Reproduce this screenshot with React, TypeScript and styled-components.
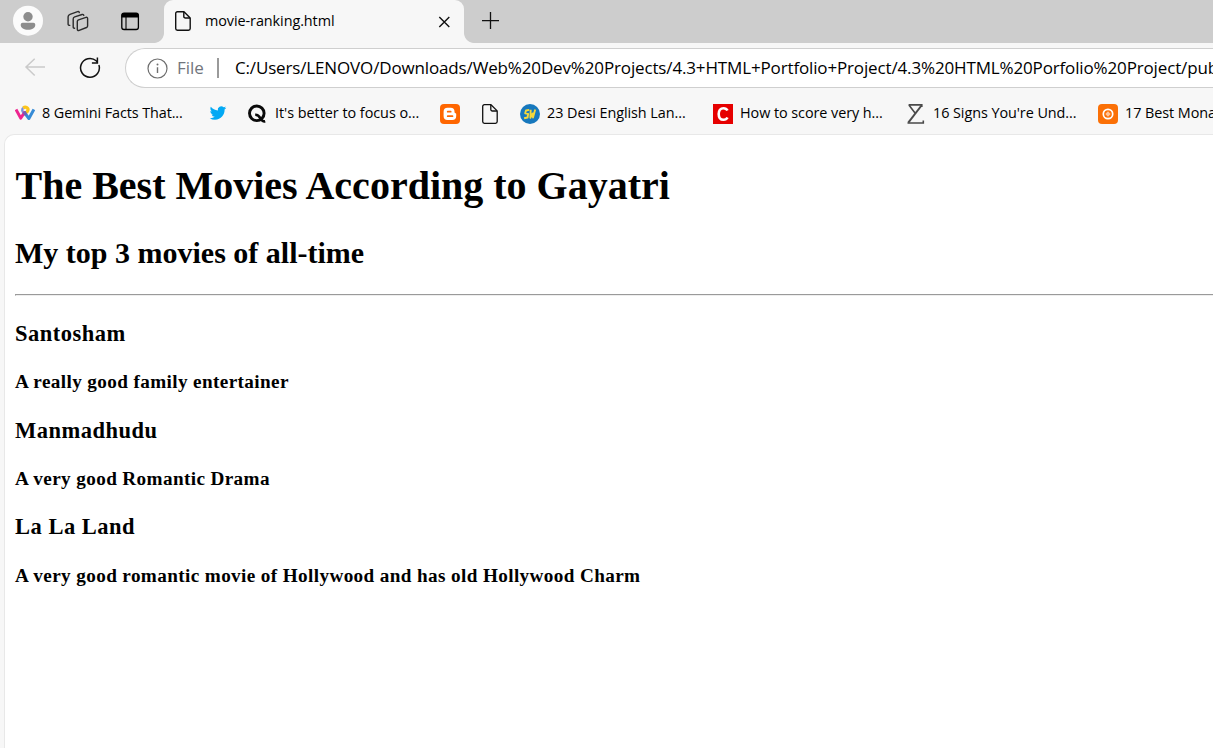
import React from 'react';
import styled, { createGlobalStyle } from 'styled-components';

const GlobalStyle = createGlobalStyle`
  body { margin: 0; background: #f7f7f7; overflow: hidden; }
  svg { display: block; flex: none; }
`;

const Window = styled.div`
  display: flex;
  flex-direction: column;
  height: 100vh;
  overflow: hidden;
  color: #000;
  font-family: "Open Sans", "Noto Sans", sans-serif;
`;

const TabStrip = styled.header`
  display: flex;
  flex: none;
  height: 43px;
  background: #cdcdcd;
`;

const StripTools = styled.div`
  display: flex;
  align-items: flex-start;
  gap: 22px;
  box-sizing: border-box;
  width: 164px;
  padding: 5px 24px 0 13px;
`;

const StripEnd = styled.div`
  margin-left: auto;
`;

const Tab = styled.div`
  position: relative;
  display: flex;
  align-items: center;
  box-sizing: border-box;
  width: 300px;
  height: 43px;
  padding: 0 13px 2px 9px;
  border-radius: 9px 9px 0 0;
  background: #f7f7f7;
  font-size: 14.4px;
`;

const TabFlare = styled.span<{ $side: 'left' | 'right' }>`
  position: absolute;
  bottom: 0;
  ${p => p.$side}: -10px;
  width: 10px;
  height: 10px;
  background: radial-gradient(
    circle at ${p => (p.$side === 'left' ? '0 0' : '100% 0')},
    transparent 9.5px,
    #f7f7f7 10.3px
  );
`;

const TabTitle = styled.span`
  flex: 1;
  margin-left: 12px;
  line-height: 20px;
  letter-spacing: -0.07px;
`;

const NewTab = styled.div`
  padding: 11px 0 0 17px;
`;

const Toolbar = styled.div`
  display: flex;
  flex: none;
  align-items: center;
  height: 50px;
  padding-left: 24px;
`;

const NavButton = styled.div<{ $gap: number }>`
  margin-right: ${p => p.$gap}px;
`;

const AddressBar = styled.div`
  display: flex;
  flex: 1;
  align-items: center;
  min-width: 0;
  box-sizing: border-box;
  height: 40px;
  padding-left: 21px;
  border: 1px solid #cfcfcf;
  border-right: 0;
  border-radius: 20px 0 0 20px;
  background: #fff;
  font-size: 17px;
  line-height: 24px;
  overflow: hidden;
`;

const Scheme = styled.span`
  margin: -1px 0 0 9px;
  color: #71757d;
`;

const Separator = styled.span`
  flex: none;
  width: 2px;
  height: 20px;
  margin: 0 16px 0 13px;
  background: #9a9a9a;
`;

const Url = styled.span`
  margin-top: -1px;
  letter-spacing: -0.145px;
  white-space: nowrap;
`;

const Bookmarks = styled.nav`
  display: flex;
  flex: none;
  align-items: center;
  height: 41px;
  padding-left: 15px;
`;

const Bookmark = styled.div<{ $width: number }>`
  display: flex;
  flex: none;
  align-items: center;
  gap: 7px;
  width: ${p => p.$width}px;
  font-size: 14.4px;
  line-height: 20px;
  white-space: nowrap;
`;

const BookmarkLabel = styled.span<{ $spacing?: number }>`
  margin-top: -1px;
  letter-spacing: ${p => p.$spacing ?? -0.06}px;
`;

const Page = styled.main`
  flex: 1;
  min-height: 0;
  margin-left: 4px;
  padding: 28px 0 0 10px;
  border: 1px solid #e8e8e8;
  border-width: 1px 0 0 1px;
  border-radius: 10px 0 0 0;
  background: #fff;
  font-family: "Liberation Serif", "Times New Roman", serif;
`;

const Title = styled.h1`
  margin: 0;
  padding-left: 0.5px;
  font-size: 40px;
  line-height: 46px;
`;

const Subtitle = styled.h2`
  margin: 27px 0 23.6px;
  font-size: 30px;
  line-height: 34px;
`;

const Rule = styled.hr`
  height: 0;
  margin: 0 0 24.2px;
  border: solid;
  border-width: 1px 0 1px 1px;
  border-color: #9a9a9a #eee #eee #9a9a9a;
`;

const MovieName = styled.h3`
  margin: 0 0 22.3px;
  font-size: 22.5px;
  line-height: 28px;
  letter-spacing: 0.5px;
`;

const MovieNote = styled.p`
  margin: 0 0 22.5px;
  font-size: 19.2px;
  font-weight: bold;
  line-height: 24px;
  letter-spacing: 0.375px;
`;

const ProfileIcon = () => (
  <svg width="30" height="31" viewBox="0 0 30 31">
    <circle cx="15" cy="15.7" r="15" fill="#fbfbfb" />
    <circle cx="15" cy="11.8" r="4.7" fill="#8d8d8d" />
    <path d="M9.700 17.700h10.600a2 2 0 0 1 2 2c0 3.200-3.200 5-7.300 5s-7.300-1.800-7.300-5a2 2 0 0 1 2-2z" fill="#8d8d8d" />
  </svg>
);

const WorkspacesIcon = () => (
  <svg width="26" height="30" viewBox="65 5 26 30" fill="none" stroke="#2b2b2b" strokeWidth="1.4" strokeLinecap="round" strokeLinejoin="round">
    <path d="M78.500 19.800 86 17.400q1.600-.4 1.600 1.200v7.300q0 1.100-1.100 1.600l-7.300 2.900q-1.900.6-1.900-1.200v-7.700q0-1.300 1.200-1.700z" />
    <path d="M83.800 15.400q-.3-1.300-1.700-.9l-7.400 2.400q-1.500.5-1.500 2v8q0 1.500 1.400 1.300" />
    <path d="M79.300 12.500q-.3-1.300-1.700-.9l-7.600 2.700q-1.900.7-1.900 2.400v7.200q0 1.600 1.700 1.500" />
  </svg>
);

const PaneIcon = () => (
  <svg width="20" height="30" viewBox="120 5 20 30" fill="none">
    <rect x="121.800" y="13.200" width="16.600" height="16.300" rx="2.300" stroke="#000" strokeWidth="1.300" />
    <path d="M121.500 17.600v-2a2.700 2.700 0 0 1 2.700-2.700h11.800a2.700 2.700 0 0 1 2.700 2.700v2z" fill="#000" />
    <path d="M126 17v12.500" stroke="#000" strokeWidth="1.100" />
  </svg>
);

const FileIcon = ({ stroke = 1.4 }: { stroke?: number }) => (
  <svg width="20" height="20" viewBox="0 0 20 20" fill="none" stroke="#111" strokeWidth={stroke} strokeLinejoin="round">
    <path d="M4.400.7h6.600l6.200 6.200v10.700a1.700 1.700 0 0 1-1.700 1.700H4.400a1.700 1.700 0 0 1-1.700-1.700V2.400A1.700 1.700 0 0 1 4.400.7z" />
    <path d="M10.800.9v4.500a1.600 1.600 0 0 0 1.600 1.600h4.600" />
  </svg>
);

const CloseIcon = () => (
  <svg width="14" height="14" viewBox="0 0 14 14" stroke="#111" strokeWidth="1.400">
    <path d="M2.300 3l10 10M12.300 3 2.300 13" />
  </svg>
);

const PlusIcon = () => (
  <svg width="19" height="19" viewBox="0 0 19 19" stroke="#111" strokeWidth="1.300">
    <path d="M1 9.700h17M9.500 1v17" />
  </svg>
);

const BackIcon = () => (
  <svg width="22" height="20" viewBox="0 0 22 20" fill="none" stroke="#cacaca" strokeWidth="1.500">
    <path d="M21 9H2.300M10.700.7 2 9l8.700 8.500" />
  </svg>
);

const ReloadIcon = () => (
  <svg width="22" height="22" viewBox="0.400 0.400 22 22" fill="none" stroke="#111" strokeWidth="1.500">
    <path d="M13.300 6.300h5.500V.8" />
    <path d="M20.300 8.300a9.400 9.400 0 1 1-2.700-4.100l1.200 1.600" />
  </svg>
);

const InfoIcon = () => (
  <svg width="21" height="21" viewBox="0 0 21 21" fill="none" stroke="#6f6f6f">
    <circle cx="10.500" cy="10.500" r="9.500" strokeWidth="1.200" />
    <path d="M10.500 9.200v5.800" strokeWidth="1.400" />
    <circle cx="10.500" cy="6.400" r="1" fill="#6f6f6f" stroke="none" />
  </svg>
);

const RibbonIcon = () => (
  <svg width="20" height="20" viewBox="0 0 20 20" fill="none" strokeWidth="3" strokeLinejoin="round">
    <path d="M8.600 8.600A3 3 0 0 1 8.200 3.900" stroke="#7c8fd9" strokeWidth="2.400" />
    <path d="M8.200 3.900c2.600-1.700 5.500.2 4.700 2.700-.4 1.200-1.300 2-2.500 2.500" stroke="#fcc51c" strokeWidth="3.200" />
    <path d="m1 5.500 4.700 8.600 4.500-6.600" stroke="#ed248f" />
    <path d="m9 8 4.900 6.500 5-9" stroke="#368bd6" />
    <path d="m8.900 7.900 2 3.100" stroke="#765ab2" />
  </svg>
);

const TwitterIcon = () => (
  <svg width="20" height="20" viewBox="-2.500 -1 29 29" fill="#03a9f4">
    <path d="M23.950 4.570a10 10 0 0 1-2.820.77 4.960 4.960 0 0 0 2.160-2.720c-.95.55-2 .95-3.120 1.180a4.920 4.920 0 0 0-8.390 4.480C7.690 8.090 4.070 6.130 1.640 3.160a4.820 4.820 0 0 0-.67 2.480c0 1.710.87 3.210 2.190 4.100a4.900 4.900 0 0 1-2.230-.62v.06a4.920 4.920 0 0 0 3.950 4.830 5 5 0 0 1-2.210.08 4.940 4.940 0 0 0 4.600 3.420A9.870 9.870 0 0 1 0 19.540a14 14 0 0 0 7.550 2.210c9.050 0 14-7.500 14-13.990 0-.21 0-.42-.02-.63a9.940 9.940 0 0 0 2.420-2.560z" />
  </svg>
);

const QIcon = () => (
  <svg width="21" height="20" viewBox="0 0 21 20" fill="none" stroke="#0a0a0a">
    <circle cx="9.800" cy="9.300" r="7.300" strokeWidth="2.900" />
    <path d="M8.200 10.700c3.400-.2 4.300 2 5.800 4.500 1.100 1.900 2.300 2.600 4.200 2" strokeWidth="2.600" />
  </svg>
);

const BloggerIcon = () => (
  <svg width="20" height="20" viewBox="0 0 20 20">
    <rect width="20" height="20" rx="4" fill="#ff6600" />
    <path d="M7.500 3.800h3.200a3.800 3.800 0 0 1 3.800 3.800c0 1.300.3 1.500 1 1.600.5.100.7.400.7.900V12a4 4 0 0 1-4 4H7.500a3.900 3.900 0 0 1-3.900-3.900V7.700a3.900 3.900 0 0 1 3.900-3.900z" fill="#fff" />
    <path d="M7.700 7.700h3M7.700 12.200h4.800" stroke="#ff6600" strokeWidth="1.700" strokeLinecap="round" />
  </svg>
);

const SwIcon = () => (
  <svg width="20" height="20" viewBox="0 0 20 20">
    <circle cx="10" cy="10" r="10" fill="#1778bd" />
    <g fill="none" stroke="#f5d83a" strokeWidth="1.900" strokeLinejoin="round">
      <path d="M9.300 5.900 6 6.500l-.8 2.800 2.900.6-.5 3.600-3.500.8" />
      <path d="m10.700 5.700-.3 8 2.300-4.300.3 4.100 2.200-8" />
    </g>
  </svg>
);

const CIcon = () => (
  <svg width="20" height="20" viewBox="0 0 20 20">
    <rect width="20" height="20" fill="#e60000" />
    <path d="M14.500 6.500C13.700 4.900 12.300 4.200 10.500 4.200 7.400 4.200 5.700 6.500 5.700 10s1.700 5.800 4.800 5.800c1.800 0 3.200-.7 4-2.300" fill="none" stroke="#fff" strokeWidth="2.600" />
  </svg>
);

const SigmaIcon = () => (
  <svg width="20" height="20" viewBox="0 0 20 20" fill="none" stroke="#4a4a4a">
    <path d="M2.600.9h13.200v2M1.500 19h15.800v-2.400M2.900 1l6.500 8.400" strokeWidth="1.600" />
    <path d="M15.500 1.500 2.300 18.700" strokeWidth="2" />
  </svg>
);

const TargetIcon = () => (
  <svg width="20" height="20" viewBox="0 0 20 20">
    <rect width="20" height="20" rx="4" fill="#fb7006" />
    <circle cx="10" cy="10" r="4.700" fill="none" stroke="#fff" strokeWidth="1.700" />
    <path d="m10 7.300 2.700 2.700-2.700 2.700L7.300 10z" fill="#ffc69b" />
  </svg>
);

const bookmarks: { icon: React.ReactNode; label?: string; width: number; spacing?: number }[] = [
  { icon: <RibbonIcon />, label: '8 Gemini Facts That...', width: 193, spacing: -0.1 },
  { icon: <TwitterIcon />, width: 39 },
  { icon: <QIcon />, label: "It's better to focus o...", width: 193, spacing: -0.03 },
  { icon: <BloggerIcon />, width: 40 },
  { icon: <FileIcon stroke={1.3} />, width: 40 },
  { icon: <SwIcon />, label: '23 Desi English Lan...', width: 193 },
  { icon: <CIcon />, label: 'How to score very h...', width: 193 },
  { icon: <SigmaIcon />, label: "16 Signs You're Und...", width: 192 },
  { icon: <TargetIcon />, label: '17 Best Mona...', width: 193 },
];

const movies = [
  ['Santosham', 'A really good family entertainer'],
  ['Manmadhudu', 'A very good Romantic Drama'],
  ['La La Land', 'A very good romantic movie of Hollywood and has old Hollywood Charm'],
];

export default function App() {
  return (
    <Window>
      <GlobalStyle />
      <TabStrip>
        <StripTools>
          <ProfileIcon />
          <WorkspacesIcon />
          <StripEnd><PaneIcon /></StripEnd>
        </StripTools>
        <Tab>
          <TabFlare $side="left" />
          <FileIcon />
          <TabTitle>movie-ranking.html</TabTitle>
          <CloseIcon />
          <TabFlare $side="right" />
        </Tab>
        <NewTab><PlusIcon /></NewTab>
      </TabStrip>
      <Toolbar>
        <NavButton $gap={33}><BackIcon /></NavButton>
        <NavButton $gap={24}><ReloadIcon /></NavButton>
        <AddressBar>
          <InfoIcon />
          <Scheme>File</Scheme>
          <Separator />
          <Url>C:/Users/LENOVO/Downloads/Web%20Dev%20Projects/4.3+HTML+Portfolio+Project/4.3%20HTML%20Porfolio%20Project/pub</Url>
        </AddressBar>
      </Toolbar>
      <Bookmarks>
        {bookmarks.map((b, i) => (
          <Bookmark key={i} $width={b.width}>
            {b.icon}
            {b.label && <BookmarkLabel $spacing={b.spacing}>{b.label}</BookmarkLabel>}
          </Bookmark>
        ))}
      </Bookmarks>
      <Page>
        <Title>The Best Movies According to Gayatri</Title>
        <Subtitle>My top 3 movies of all-time</Subtitle>
        <Rule />
        {movies.map(([name, note]) => (
          <React.Fragment key={name}>
            <MovieName>{name}</MovieName>
            <MovieNote>{note}</MovieNote>
          </React.Fragment>
        ))}
      </Page>
    </Window>
  );
}
